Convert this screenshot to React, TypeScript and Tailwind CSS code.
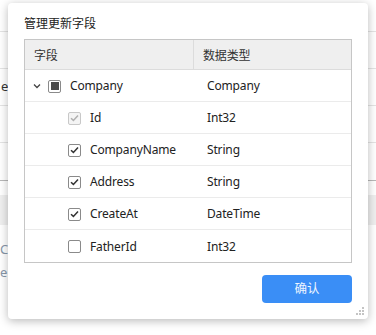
import React from "react";

const font = { fontFamily: '"Noto Sans", "Noto Sans CJK SC", sans-serif' };

function Check({ disabled }: { disabled?: boolean }) {
  return (
    <div
      className={
        "w-[13px] h-[13px] rounded-[2px] border flex items-center justify-center " +
        (disabled ? "border-[#c8c8c8] bg-[#f4f4f4]" : "border-[#8a8a8a] bg-white")
      }
    >
      <svg width="9" height="8" viewBox="0 0 9 8">
        <path
          d="M1 4.2 L3.4 6.4 L8 1.4"
          fill="none"
          stroke={disabled ? "#b0b0b0" : "#333"}
          strokeWidth="1.5"
        />
      </svg>
    </div>
  );
}

function Empty() {
  return <div className="w-[13px] h-[13px] rounded-[2px] border border-[#8a8a8a] bg-white" />;
}

const rows = [
  { name: "Id", type: "Int32", state: "disabled" },
  { name: "CompanyName", type: "String", state: "checked" },
  { name: "Address", type: "String", state: "checked" },
  { name: "CreateAt", type: "DateTime", state: "checked" },
  { name: "FatherId", type: "Int32", state: "empty" },
];

export default function App() {
  return (
    <div className="relative w-[376px] h-[335px] overflow-hidden bg-white" style={font}>
      {/* background page */}
      <div className="flex flex-col text-[13px]">
        <div className="h-[32px] border-b border-[#e4e4e4]" />
        <div className="h-[37px] border-b border-[#e4e4e4]" />
        <div className="h-[37px] border-b border-[#e4e4e4] flex items-center pl-[1px] text-[#333]">e</div>
        <div className="h-[37px] border-b border-[#e4e4e4]" />
        <div className="h-[38px] border-b border-[#b8b8b8]" />
        <div className="h-[14px]" />
        <div className="h-[30px] bg-[#efefef]" />
        <div className="h-[14px]" />
        <div className="h-[22px] flex items-center text-[#8796a8]">Co</div>
        <div className="h-[24px] flex items-center text-[#8796a8]">e</div>
      </div>

      {/* dialog */}
      <div className="absolute left-[8px] top-[3px] w-[360px] h-[316px] bg-white rounded-[4px] shadow-[0_2px_10px_rgba(0,0,0,0.28)] flex flex-col px-[16px]">
        <div className="h-[36px] flex items-center pt-[5px] text-[12px] text-[#222]">管理更新字段</div>
        <div className="border border-[#c6c6c6] flex flex-col text-[12px] tracking-[-0.15px] text-[#222]">
          <div className="h-[30px] flex bg-[#efefef] border-b border-[#dcdcdc] text-[12px] text-[#333]">
            <div className="w-[169px] border-r border-[#dcdcdc] flex items-center pl-[9px] pt-[2px]">字段</div>
            <div className="flex-1 flex items-center pl-[9px] pt-[2px]">数据类型</div>
          </div>
          <div className="h-[32px] flex border-b border-[#ebebeb]">
            <div className="w-[170px] flex items-center pl-[8px] pt-[1px]">
              <svg width="8" height="6" viewBox="0 0 8 6" className="mr-[7px]">
                <path d="M1 1.5 L4 4.5 L7 1.5" fill="none" stroke="#444" strokeWidth="1.3" />
              </svg>
              <div className="w-[13px] h-[13px] rounded-[2px] border border-[#8a8a8a] bg-white flex items-center justify-center mr-[9px]">
                <div className="w-[8px] h-[8px] bg-[#4a4a4a]" />
              </div>
              <span>Company</span>
            </div>
            <div className="flex-1 flex items-center pl-[12px] pt-[1px]">Company</div>
          </div>
          {rows.map((r, i) => (
            <div
              key={r.name}
              className={"h-[32px] flex " + (i < rows.length - 1 ? "border-b border-[#ebebeb]" : "")}
            >
              <div className="w-[170px] flex items-center pl-[43px] pt-[1px]">
                <div className="mr-[9px]">
                  {r.state === "empty" ? <Empty /> : <Check disabled={r.state === "disabled"} />}
                </div>
                <span>{r.name}</span>
              </div>
              <div className="flex-1 flex items-center pl-[12px] pt-[1px]">{r.type}</div>
            </div>
          ))}
        </div>
        <div className="flex justify-end mt-[12px]">
          <button className="w-[90px] h-[28px] rounded-[4px] bg-[#3a8ef6] text-[#eef5ff] text-[12.5px] flex items-center justify-center">
            确认
          </button>
        </div>
        {/* resize grip */}
        <svg className="absolute right-[3px] bottom-[3px]" width="10" height="10" viewBox="0 0 10 10">
          <rect x="7" y="1" width="2" height="2" fill="#c4c4c4" />
          <rect x="4" y="4" width="2" height="2" fill="#c4c4c4" />
          <rect x="7" y="4" width="2" height="2" fill="#c4c4c4" />
          <rect x="1" y="7" width="2" height="2" fill="#c4c4c4" />
          <rect x="4" y="7" width="2" height="2" fill="#c4c4c4" />
          <rect x="7" y="7" width="2" height="2" fill="#c4c4c4" />
        </svg>
      </div>
    </div>
  );
}
